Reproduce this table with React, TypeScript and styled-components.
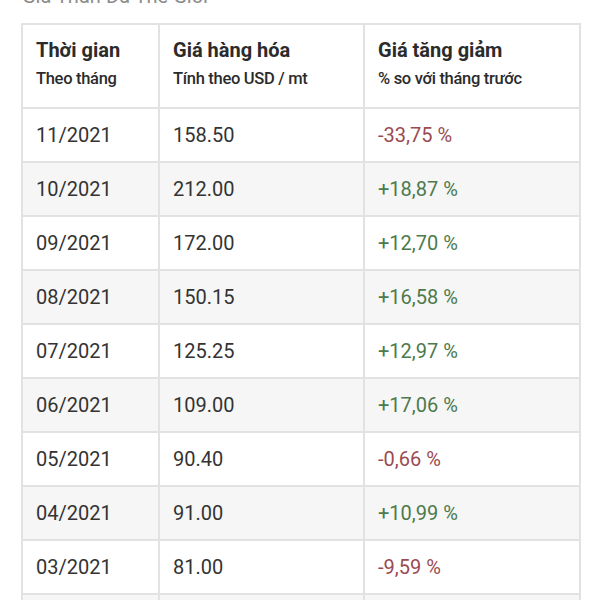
import React from "react";
import styled, { createGlobalStyle } from "styled-components";

const Global = createGlobalStyle`
  html, body { margin: 0; padding: 0; background: #fff; }
  body { font-family: Roboto, "Noto Sans", Arial, sans-serif; overflow: hidden; }
`;

const Page = styled.div`
  width: 600px;
  height: 600px;
  overflow: hidden;
  padding: 0 21px;
  box-sizing: border-box;
`;

const Title = styled.div`
  font-size: 20px;
  line-height: 24px;
  color: #8c8c8c;
  margin-top: -16px;
  margin-bottom: 15px;
  padding-left: 1px;
`;

const Table = styled.table`
  border-collapse: collapse;
  width: 558px;
  table-layout: fixed;
  border: 2px solid #e2e2e2;
`;

const Col = styled.col<{ $w: number }>`
  width: ${(p) => p.$w}px;
`;

const HeadCell = styled.th`
  text-align: left;
  vertical-align: top;
  border: 2px solid #e2e2e2;
  padding: 12px 10px 0 13px;
  height: 70px;
  color: #2b2b2b;
`;

const HeadMain = styled.div`
  font-size: 20px;
  font-weight: 700;
  line-height: 26px;
`;

const HeadSub = styled.div`
  font-size: 16.5px;
  font-weight: 500;
  line-height: 20px;
  margin-top: 6px;
  letter-spacing: -0.3px;
  white-space: nowrap;
`;

const Row = styled.tr<{ $alt: boolean }>`
  background: ${(p) => (p.$alt ? "#f6f6f6" : "#ffffff")};
`;

const Cell = styled.td<{ $tone?: "up" | "down" }>`
  border: 2px solid #e2e2e2;
  height: 52px;
  padding: 0 12px 0 13px;
  font-size: 20px;
  color: ${(p) =>
    p.$tone === "up" ? "#4c7a4c" : p.$tone === "down" ? "#9a4b52" : "#333333"};
  vertical-align: middle;
`;

const rows = [
  ["11/2021", "158.50", "-33,75 %"],
  ["10/2021", "212.00", "+18,87 %"],
  ["09/2021", "172.00", "+12,70 %"],
  ["08/2021", "150.15", "+16,58 %"],
  ["07/2021", "125.25", "+12,97 %"],
  ["06/2021", "109.00", "+17,06 %"],
  ["05/2021", "90.40", "-0,66 %"],
  ["04/2021", "91.00", "+10,99 %"],
  ["03/2021", "81.00", "-9,59 %"],
  ["02/2021", "89.60", "+3,22 %"],
];

export default function App() {
  return (
    <>
      <Global />
      <Page>
        <Title>Giá Than Đá Thế Giới</Title>
        <Table>
          <colgroup>
            <Col $w={137} />
            <Col $w={205} />
            <Col $w={216} />
          </colgroup>
          <thead>
            <tr>
              <HeadCell>
                <HeadMain>Thời gian</HeadMain>
                <HeadSub>Theo tháng</HeadSub>
              </HeadCell>
              <HeadCell>
                <HeadMain>Giá hàng hóa</HeadMain>
                <HeadSub>Tính theo USD / mt</HeadSub>
              </HeadCell>
              <HeadCell>
                <HeadMain>Giá tăng giảm</HeadMain>
                <HeadSub>% so với tháng trước</HeadSub>
              </HeadCell>
            </tr>
          </thead>
          <tbody>
            {rows.map((r, i) => (
              <Row key={r[0]} $alt={i % 2 === 1}>
                <Cell>{r[0]}</Cell>
                <Cell>{r[1]}</Cell>
                <Cell $tone={r[2].startsWith("-") ? "down" : "up"}>{r[2]}</Cell>
              </Row>
            ))}
          </tbody>
        </Table>
      </Page>
    </>
  );
}
